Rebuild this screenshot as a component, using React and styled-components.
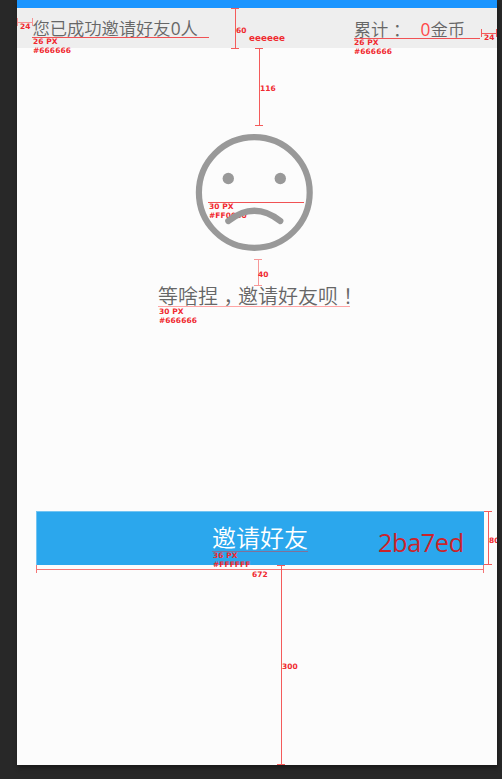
import React from "react";
import styled, { createGlobalStyle, css } from "styled-components";

const GlobalStyle = createGlobalStyle`
  * { box-sizing: border-box; }
  body { margin: 0; background: #282828; }
`;

const Workspace = styled.main`
  width: 502px;
  height: 779px;
  padding-left: 17px;
  overflow: hidden;
  background: #282828;
  font-family: "Open Sans", "Noto Sans CJK SC", sans-serif;
  font-weight: 350;
  color: #666;
`;

const Artboard = styled.section`
  position: relative;
  display: flex;
  flex-direction: column;
  align-items: center;
  width: 480px;
  height: 765px;
  background: #fcfcfc;
  box-shadow: 1px 3px 4px #1a1a1a;
`;

const StatusStrip = styled.div`
  width: 100%;
  height: 8px;
  flex: none;
  background: #1b95ff;
`;

const SummaryBar = styled.header`
  display: flex;
  justify-content: space-between;
  width: 100%;
  height: 40px;
  flex: none;
  padding: 0 32px 0 15.4px;
  background: #eee;
  border-top: 1px solid #f4efeb;
  font-size: 17.3px;
  line-height: 39px;
  white-space: nowrap;
`;

const Total = styled.div`
  display: flex;
  padding-top: 1px;
`;

const Punctuation = styled.span`
  display: inline-block;
  width: 1em;
  text-indent: ${(p) => p.$shift}em;
`;

const Coins = styled.span`
  margin-left: 15px;
`;

const Count = styled.span`
  font-weight: 400;
  color: ${(p) => (p.$highlight ? "#ff4848" : "inherit")};
`;

const SadFace = styled.svg`
  position: relative;
  z-index: 2;
  flex: none;
  width: 118px;
  height: 118px;
  margin: 85px 0 0 -6px;
`;

const Message = styled.p`
  width: 200px;
  height: 30px;
  margin: 31px 0 0 141px;
  align-self: flex-start;
  font-size: 20px;
  line-height: 30px;
  white-space: nowrap;
`;

const InviteButton = styled.button`
  display: flex;
  align-items: center;
  justify-content: center;
  width: 448px;
  height: 54px;
  margin: 199px 0 0 6px;
  padding: 0 0 3px;
  border: 0;
  background: #2ba7ed;
  box-shadow: inset 0 1px #73c4f2, inset 1px 0 #73c4f2;
  color: #fff;
  font: inherit;
  font-size: 24px;
`;

const Annotations = styled.div`
  position: absolute;
  inset: 0;
  z-index: 1;
  overflow: hidden;
  pointer-events: none;
`;

const Note = styled.span`
  position: absolute;
  left: ${(p) => p.$x - 17}px;
  top: ${(p) => p.$y - 2}px;
  color: #f0292f;
  font: 700 ${(p) => p.$size || 7.5}px/10px "DejaVu Sans", sans-serif;
  letter-spacing: 0.05px;
  white-space: pre;
`;

const Underline = styled.i`
  position: absolute;
  left: ${(p) => p.$x - 17}px;
  top: ${(p) => p.$y}px;
  width: ${(p) => p.$length}px;
  height: 1px;
  background: ${(p) => p.$color || "#f05254"};
`;

const Ruler = styled.i`
  position: absolute;
  left: ${(p) => p.$x - 17}px;
  top: ${(p) => p.$y}px;
  --line: ${(p) => p.$color || "#f45b5b"};
  ${(p) =>
    p.$vertical
      ? css`
          width: 8px;
          height: ${p.$length}px;
          border: solid var(--line);
          border-width: 1px 0;
          background: linear-gradient(var(--line), var(--line)) 4px 0 / 1px 100% no-repeat;
        `
      : css`
          width: ${p.$length}px;
          height: 8px;
          border: solid var(--line);
          border-width: 0 1px;
          background: linear-gradient(var(--line), var(--line)) 0 4px / 100% 1px no-repeat;
        `}
`;

const ColorCode = styled.span`
  position: absolute;
  left: 361px;
  top: 524px;
  color: #cb242b;
  font-family: "Open Sans", sans-serif;
  font-size: 25.3px;
  font-weight: 400;
  letter-spacing: -0.4px;
  line-height: 36px;
`;

const underlines = [
  [32, 37, 177],
  [354, 38, 126],
  [208, 202, 96],
  [158, 306, 192, "#ffa5a5"],
  [212, 551, 96, "#80729a"],
];

const rulers = [
  [17, 18, 16, false, "#f69393"],
  [481, 29, 16, false],
  [231, 8, 41, true],
  [255, 48, 78, true],
  [254, 259, 27, true, "#f79898"],
  [36, 565, 448, false, "#f47676"],
  [484, 511, 54, true],
  [277, 565, 200, true],
];

const notes = [
  [20, 24, "24"],
  [33, 39, "26 PX"],
  [33, 48, "#666666"],
  [236, 28, "60"],
  [249, 35, "eeeeee", 8.8],
  [354, 40, "26 PX"],
  [354, 49, "#666666"],
  [484, 35, "24"],
  [260, 86, "116"],
  [209, 204, "30 PX"],
  [209, 213, "#FF0000"],
  [258, 272, "40"],
  [159, 309, "30 PX"],
  [159, 318, "#666666"],
  [213, 553, "36 PX"],
  [213, 562, "#FFFFFF"],
  [252, 572, "672"],
  [489, 538, "80"],
  [282, 664, "300"],
];

function DesignNotes() {
  return (
    <Annotations>
      {underlines.map(([x, y, length, color]) => (
        <Underline key={`${x}-${y}`} $x={x} $y={y} $length={length} $color={color} />
      ))}
      {rulers.map(([x, y, length, vertical, color]) => (
        <Ruler key={`${x}-${y}`} $x={x} $y={y} $length={length} $vertical={vertical} $color={color} />
      ))}
      {notes.map(([x, y, text, size]) => (
        <Note key={`${x}-${y}`} $x={x} $y={y} $size={size}>{text}</Note>
      ))}
      <ColorCode>2ba7ed</ColorCode>
    </Annotations>
  );
}

export default function App() {
  return (
    <>
      <GlobalStyle />
      <Workspace>
        <Artboard>
          <StatusStrip />
          <SummaryBar>
            <span>您已成功邀请好友<Count>0</Count>人</span>
            <Total>
              <span>累计<Punctuation $shift={0.28}>：</Punctuation></span>
              <Coins><Count $highlight>0</Count>金币</Coins>
            </Total>
          </SummaryBar>
          <SadFace viewBox="0 0 118 118" fill="none" stroke="#999" strokeWidth="6.2" strokeLinecap="round">
            <circle cx="59.3" cy="59.5" r="55.4" />
            <circle cx="33.3" cy="45.5" r="5.7" fill="#999" stroke="none" />
            <circle cx="85.3" cy="45.5" r="5.7" fill="#999" stroke="none" />
            <path d="M33.3 88 Q59.3 67.5 85.3 88" />
          </SadFace>
          <Message>
            等啥捏<Punctuation $shift={0.28}>，</Punctuation>邀请好友呗<Punctuation $shift={0.25}>！</Punctuation>
          </Message>
          <InviteButton>邀请好友</InviteButton>
          <DesignNotes />
        </Artboard>
      </Workspace>
    </>
  );
}
